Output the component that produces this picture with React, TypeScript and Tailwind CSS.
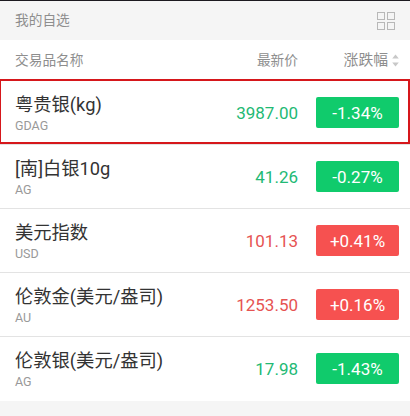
type Quote = {
  name: string;
  code: string;
  price: string;
  change: string;
  highlighted?: boolean;
};

const quotes: Quote[] = [
  { name: "粤贵银(kg)", code: "GDAG", price: "3987.00", change: "-1.34%", highlighted: true },
  { name: "[南]白银10g", code: "AG", price: "41.26", change: "-0.27%" },
  { name: "美元指数", code: "USD", price: "101.13", change: "+0.41%" },
  { name: "伦敦金(美元/盎司)", code: "AU", price: "1253.50", change: "+0.16%" },
  { name: "伦敦银(美元/盎司)", code: "AG", price: "17.98", change: "-1.43%" },
];

function GridIcon() {
  return (
    <svg width="18" height="18" viewBox="0 0 18 18" fill="none" stroke="#b8b8b8">
      <rect x="0.5" y="0.5" width="7" height="7" />
      <rect x="10.5" y="0.5" width="7" height="7" />
      <rect x="0.5" y="10.5" width="7" height="7" />
      <rect x="10.5" y="10.5" width="7" height="7" />
    </svg>
  );
}

function SortIcon() {
  return (
    <svg width="7" height="13" viewBox="0 0 7 13" fill="#c8c8c8">
      <path d="M3.5 0.5 6.8 4.6H0.2z" />
      <path d="M3.5 12.5 0.2 8.4h6.6z" />
    </svg>
  );
}

function QuoteRow({ quote }: { quote: Quote }) {
  const isUp = quote.change.startsWith("+");

  return (
    <div className="relative flex h-16 items-center border-b border-[#e3e3e3] pl-[15px] pr-[11px] last:border-white">
      <div className="flex-1">
        <div className="h-[25px] whitespace-nowrap text-[18.3px] leading-[25px] text-[#333]">
          {quote.name}
        </div>
        <div className="h-[17px] text-[12.5px] leading-[17px] text-[#999]">{quote.code}</div>
      </div>
      <div
        className={`mr-[18px] pt-px text-[17px] leading-6 ${isUp ? "text-[#e65352]" : "text-[#22b974]"}`}
      >
        {quote.price}
      </div>
      <div
        className={`flex h-[31px] w-[83px] items-center justify-center rounded-[2px] pt-0.5 text-[17px] text-white ${isUp ? "bg-[#f65150]" : "bg-[#10cb6c]"}`}
      >
        {quote.change}
      </div>
      {quote.highlighted && (
        <div className="absolute -left-px right-0 -top-0.5 bottom-0 border-2 border-[#d6171b]" />
      )}
    </div>
  );
}

export default function App() {
  return (
    <div className="h-[416px] w-[410px] overflow-hidden bg-[#f5f5f5] font-[Roboto,'Noto_Sans_CJK_SC',sans-serif] font-normal">
      <div className="flex h-10 items-center justify-between border-t border-[#1c1a20] pl-[15px] pr-[15px]">
        <span className="text-[13.7px] text-[#8e8e8e]">我的自选</span>
        <GridIcon />
      </div>
      <div className="flex h-[41px] items-center bg-white pl-[15px] pr-[11px] text-[13.7px] text-[#8e8e8e]">
        <span className="flex-1">交易品名称</span>
        <span className="mr-[18px]">最新价</span>
        <div className="flex w-[83px] items-center justify-end gap-1">
          <span className="text-[14.8px]">涨跌幅</span>
          <SortIcon />
        </div>
      </div>
      <div className="bg-white">
        {quotes.map((quote) => (
          <QuoteRow key={quote.name} quote={quote} />
        ))}
      </div>
    </div>
  );
}
